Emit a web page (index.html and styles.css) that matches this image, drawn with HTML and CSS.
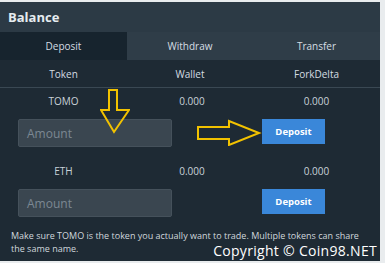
FILE: index.html
```html
<!DOCTYPE html>
<html lang="en">
<head>
    <meta charset="UTF-8">
    <title>Balance</title>
    <link rel="stylesheet" href="styles.css">
</head>
<body>
    <div class="panel">
        <div class="panel-title">Balance</div>

        <div class="tabs">
            <div class="tab active">Deposit</div>
            <div class="tab">Withdraw</div>
            <div class="tab">Transfer</div>
        </div>

        <div class="cols head">
            <span>Token</span>
            <span>Wallet</span>
            <span>ForkDelta</span>
        </div>

        <!-- TOMO -->
        <div class="cols token-row">
            <span>TOMO</span>
            <span>0.000</span>
            <span>0.000</span>
        </div>
        <div class="form-row">
            <div class="amount">Amount</div>
            <button class="deposit-btn">Deposit</button>
        </div>

        <!-- ETH -->
        <div class="cols token-row">
            <span>ETH</span>
            <span>0.000</span>
            <span>0.000</span>
        </div>
        <div class="form-row">
            <div class="amount">Amount</div>
            <button class="deposit-btn">Deposit</button>
        </div>

        <p class="note">Make sure TOMO is the token you actually want to trade. Multiple tokens can share<br>the same name.</p>

        <!-- annotation arrows -->
        <svg class="arrow arrow-down" width="30" height="46" viewBox="0 0 30 46">
            <path d="M9 2 H17 V22 H29 L14 44 L1 22 H9 Z" fill="none" stroke="#f2c200" stroke-width="2"/>
        </svg>
        <svg class="arrow arrow-right" width="66" height="28" viewBox="0 0 66 28">
            <path d="M2 9 H33 V3 L63 15 L33 27 V21 H2 Z" fill="none" stroke="#f2c200" stroke-width="2"/>
        </svg>

        <div class="watermark">Copyright © Coin98.NET</div>
    </div>
</body>
</html>
```

FILE: styles.css
```css
:root {
    --header-bg: #2c3a45;
    --tab-bg: #2f3d48;
    --tab-active: #17242e;
    --body-bg: #1e2a34;
    --text: #c9d2d9;
    --blue: #3a87d9;
}

body {
    margin: 0;
    background-color: #e9ecee;
    font-family: 'Open Sans', 'Noto Sans', sans-serif;
}

.panel {
    position: relative;
    width: 380px;
    height: 259px;
    margin-top: 2px;
    background-color: var(--body-bg);
    color: var(--text);
    overflow: hidden;
}

.panel-title {
    height: 30px;
    padding-left: 8px;
    display: flex;
    align-items: center;
    background-color: var(--header-bg);
    color: #e6ecf0;
    font-size: 13px;
    font-weight: 700;
}

.tabs {
    display: grid;
    grid-template-columns: 127px 126px 127px;
    height: 28px;
}

.tab {
    display: flex;
    align-items: center;
    justify-content: center;
    background-color: var(--tab-bg);
    color: #d5dde3;
    font-size: 10px;
}

.tab.active {
    background-color: var(--tab-active);
}

.cols {
    display: grid;
    grid-template-columns: 127px 126px 127px;
    font-size: 10px;
}

.cols span {
    text-align: center;
}

.head {
    height: 27px;
    align-items: center;
    border-bottom: 1px solid #3a4853;
    color: #d5dde3;
}

.token-row {
    height: 24px;
    align-items: center;
    padding-top: 1px;
}

.token-row span:nth-child(2) {
    padding-left: 4px;
}

.form-row {
    display: flex;
    align-items: flex-start;
    height: 39px;
    padding-top: 6px;
}

.amount {
    width: 154px;
    height: 28px;
    margin-left: 18px;
    padding-left: 8px;
    display: flex;
    align-items: center;
    background-color: #3a4650;
    border: 1px solid #45515b;
    border-radius: 2px;
    box-sizing: border-box;
    color: #7c8893;
    font-size: 12px;
}

.deposit-btn {
    margin-left: 90px;
    width: 63px;
    height: 25px;
    border: none;
    background-color: var(--blue);
    color: #fff;
    font-family: inherit;
    font-size: 9.5px;
    font-weight: 700;
    padding: 0;
}

.note {
    margin: 1px 0 0 0;
    padding: 0 0 0 11px;
    font-size: 9px;
    line-height: 13px;
    white-space: nowrap;
    color: #d0d7dd;
}

.arrow {
    position: absolute;
}

.arrow-down {
    left: 100px;
    top: 86px;
}

.arrow-right {
    left: 196px;
    top: 116px;
}

.watermark {
    position: absolute;
    right: 3px;
    bottom: 1px;
    color: #fff;
    font-family: 'Open Sans', sans-serif;
    font-size: 14px;
    letter-spacing: 0.3px;
}
```
